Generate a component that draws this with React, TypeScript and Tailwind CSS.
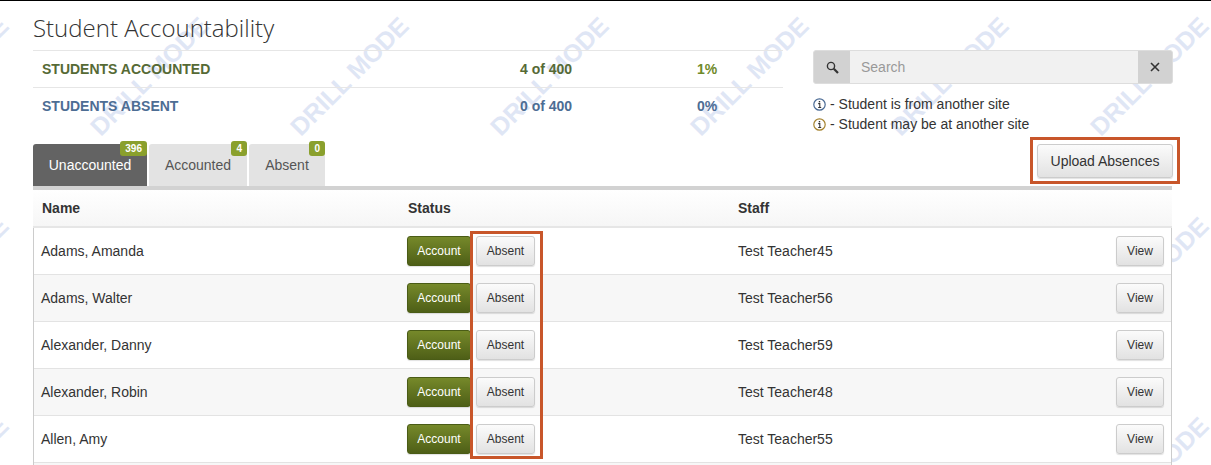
const rows = [
  ["Adams, Amanda", "Test Teacher45"],
  ["Adams, Walter", "Test Teacher56"],
  ["Alexander, Danny", "Test Teacher59"],
  ["Alexander, Robin", "Test Teacher48"],
  ["Allen, Amy", "Test Teacher55"],
];

const tiles = Array.from({ length: 24 });

function Watermark() {
  return (
    <div className="absolute left-[-150px] top-[-25px] w-[1600px] h-[600px] grid grid-cols-[repeat(8,200px)] auto-rows-[200px] overflow-hidden pointer-events-none select-none">
      {tiles.map((_, i) => (
        <div key={i} className="flex items-center justify-center">
          <span className="-rotate-45 text-[25px] leading-none font-bold whitespace-nowrap text-[#dfe6f5] font-['Liberation_Sans',sans-serif]">
            DRILL MODE
          </span>
        </div>
      ))}
    </div>
  );
}

function InfoIcon({ color }: { color: string }) {
  return (
    <svg width="13" height="13" viewBox="0 0 13 13" fill="none" className="shrink-0">
      <circle cx="6.5" cy="6.5" r="5.7" stroke={color} strokeWidth="1.2" />
      <path d="M5.2 5.6H6.8V9.3M5.2 9.5H8.2" stroke="#333" strokeWidth="1.1" />
      <rect x="5.8" y="3" width="1.4" height="1.4" fill="#333" />
    </svg>
  );
}

function Tab({ label, count, active, w }: { label: string; count: string; active?: boolean; w: string }) {
  return (
    <div
      className={`relative h-[42px] flex items-center justify-center rounded-t-[3px] text-[14px] ${w} ${
        active ? "bg-[#636363] text-white" : "bg-[#e3e3e3] text-[#555]"
      }`}
    >
      <span>{label}</span>
      <span className="absolute right-0 top-[-3px] h-[15px] px-[5px] flex items-center rounded-[3px] bg-[#8aa02d] text-white text-[10px] font-bold">
        {count}
      </span>
    </div>
  );
}

const grayBtn =
  "flex items-center justify-center rounded-[3px] border border-[#ccc] bg-gradient-to-b from-[#fbfbfb] to-[#e2e2e2] text-[#333] shadow-[0_1px_1px_rgba(0,0,0,0.12)]";

export default function App() {
  return (
    <div className="relative w-[1211px] h-[465px] overflow-hidden bg-white border-t border-black font-['Liberation_Sans',Arial,sans-serif] text-[#333]">
      <Watermark />
      <div className="relative px-[33px]">
        <div className="flex justify-between w-[1140px]">
          <div className="w-[750px]">
            <h1 className="h-[49px] pt-[11px] text-[24px] leading-[32px] font-light text-[#333] font-['Open_Sans',sans-serif]">
              Student Accountability
            </h1>
            <div className="border-t border-[#e6e6e6] h-[37px] grid grid-cols-[478px_177px_1fr] items-center pl-[9px] text-[14px] font-bold text-[#566a35]">
              <span className="mt-[1px]">STUDENTS ACCOUNTED</span>
              <span className="mt-[1px]">4 of 400</span>
              <span className="mt-[1px] text-[#6f8a2a]">1%</span>
            </div>
            <div className="border-t border-[#e6e6e6] h-[37px] grid grid-cols-[478px_177px_1fr] items-center pl-[9px] text-[14px] font-bold text-[#4d6d94]">
              <span className="mt-[1px]">STUDENTS ABSENT</span>
              <span className="mt-[1px]">0 of 400</span>
              <span className="mt-[1px]">0%</span>
            </div>
          </div>
          <div className="w-[360px] pt-[49px]">
            <div className="flex h-[34px] rounded-[3px] overflow-hidden border border-[#ddd] bg-[#d2d2d2]">
              <div className="w-[36px] flex items-center justify-center">
                <svg width="13" height="13" viewBox="0 0 13 13" fill="none">
                  <circle cx="5" cy="5" r="3.6" stroke="#333" strokeWidth="1.4" />
                  <path d="M7.8 7.8L12 12" stroke="#333" strokeWidth="2.2" />
                </svg>
              </div>
              <div className="flex-1 bg-[#f1f1f1] flex items-center pl-[11px] text-[14px] text-[#999]">Search</div>
              <div className="w-[34px] flex items-center justify-center">
                <svg width="10" height="10" viewBox="0 0 10 10" fill="none">
                  <path d="M1 1L9 9M9 1L1 9" stroke="#333" strokeWidth="1.6" />
                </svg>
              </div>
            </div>
            <div className="mt-[10px] text-[14px] leading-[20px]">
              <div className="flex items-center gap-[4px]">
                <InfoIcon color="#4a6a94" />
                <span>- Student is from another site</span>
              </div>
              <div className="flex items-center gap-[4px]">
                <InfoIcon color="#a5832f" />
                <span>- Student may be at another site</span>
              </div>
            </div>
          </div>
        </div>
        <div className="flex justify-between items-end w-[1140px] mt-[-4px] h-[56px]">
          <div className="flex gap-[2px]">
            <Tab label="Unaccounted" count="396" active w="w-[114px]" />
            <Tab label="Accounted" count="4" w="w-[98px]" />
            <Tab label="Absent" count="0" w="w-[76px]" />
          </div>
          <div className={`${grayBtn} w-[136px] h-[34px] mb-[8px] text-[14px]`}>Upload Absences</div>
        </div>
        <div className="w-[1139px] h-[4px] bg-[#d2d2d2]" />
        <div className="w-[1139px] bg-white">
          <div className="h-[38px] grid grid-cols-[366px_330px_1fr] items-center pl-[9px] text-[14px] font-bold bg-gradient-to-b from-white to-[#f6f6f6] border-b-2 border-[#e6e6e6]">
            <span>Name</span>
            <span>Status</span>
            <span>Staff</span>
          </div>
          <div className="border-x border-[#ccc]">
            {rows.map(([name, staff], i) => (
              <div
                key={name}
                className={`h-[47px] grid grid-cols-[366px_331px_1fr] items-center pl-[7px] pr-[7px] text-[14px] border-b border-[#e3e3e3] ${
                  i % 2 === 1 ? "bg-[#f7f7f7]" : "bg-white"
                }`}
              >
                <span>{name}</span>
                <div className="flex gap-[5px] text-[12px]">
                  <div className="w-[64px] h-[30px] flex items-center justify-center rounded-[3px] border border-[#4a5c16] bg-gradient-to-b from-[#76892a] to-[#4e5f17] text-white shadow-[0_1px_1px_rgba(0,0,0,0.12)]">
                    Account
                  </div>
                  <div className={`${grayBtn} w-[59px] h-[30px]`}>Absent</div>
                </div>
                <div className="flex items-center justify-between">
                  <span>{staff}</span>
                  <div className={`${grayBtn} w-[48px] h-[30px] text-[12px]`}>View</div>
                </div>
              </div>
            ))}
            <div className="h-[47px] bg-[#f7f7f7]" />
          </div>
        </div>
      </div>
      <div className="absolute left-[1030px] top-[136px] w-[150px] h-[47px] border-[3px] border-[#c8562a]" />
      <div className="absolute left-[470px] top-[230px] w-[73px] h-[228px] border-[3px] border-[#c8562a]" />
    </div>
  );
}
